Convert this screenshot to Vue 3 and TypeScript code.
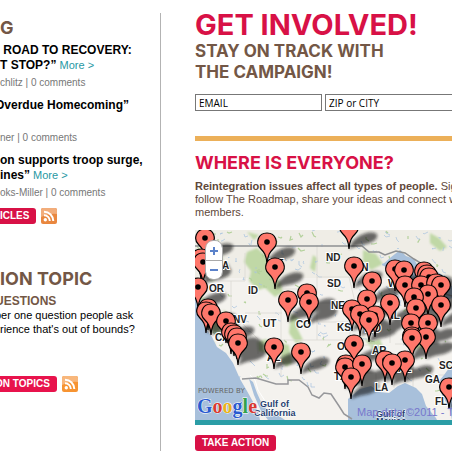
<script setup lang="ts">
interface Post {
  lines: string[]
  more: boolean
  bleed: boolean
  meta: string
}
interface Label {
  text: string
  x: number
  y: number
}

const posts: Post[] = [
  { lines: [' ROAD TO RECOVERY:', 'T STOP?”'], more: true, bleed: false, meta: 'chlitz | 0 comments' },
  { lines: ['Overdue Homecoming”', ''], more: false, bleed: true, meta: 'ner | 0 comments' },
  { lines: ['on supports troop surge,', 'ines”'], more: true, bleed: false, meta: 'oks-Miller | 0 comments' },
]

// Centre of each marker's dot, in map units, ordered back to front
const pins: [number, number][] = [
  [154, -3], [10, 8], [6, 28], [8, 32], [72, 12], [80, 37], [3, 57],
  [200, 39], [209, 40], [229, 41], [232, 44], [234, 47], [159, 36], [177, 51],
  [210, 55], [226, 55], [241, 53], [246, 55], [233, 64], [219, 67], [172, 69],
  [112, 63], [114, 72], [93, 70], [195, 73], [246, 75], [221, 78], [13, 78], [11, 81], [16, 83],
  [157, 79], [180, 85], [165, 84], [174, 90], [216, 93], [233, 93],
  [31, 91], [36, 102], [39, 104], [42, 107], [43, 113],
  [217, 106], [231, 107], [217, 108], [159, 114], [79, 117], [106, 122],
  [151, 134], [150, 137], [167, 134], [156, 147], [190, 130], [210, 130], [197, 133], [254, 157],
]

const labels: Label[] = [
  { text: 'WA', x: 18, y: 39 },
  { text: 'OR', x: 14, y: 62 },
  { text: 'ID', x: 53, y: 64 },
  { text: 'MT', x: 74, y: 37 },
  { text: 'ND', x: 131, y: 31 },
  { text: 'SD', x: 132, y: 57 },
  { text: 'NE', x: 136, y: 79 },
  { text: 'KS', x: 142, y: 101 },
  { text: 'MN', x: 158, y: 41 },
  { text: 'WI', x: 193, y: 57 },
  { text: 'IL', x: 196, y: 89 },
  { text: 'NV', x: 38, y: 93 },
  { text: 'UT', x: 68, y: 97 },
  { text: 'CO', x: 101, y: 98 },
  { text: 'CA', x: 20, y: 111 },
  { text: 'AZ', x: 72, y: 131 },
  { text: 'OK', x: 142, y: 120 },
  { text: 'MO', x: 170, y: 102 },
  { text: 'TX', x: 139, y: 150 },
  { text: 'AR', x: 177, y: 124 },
  { text: 'AL', x: 203, y: 142 },
  { text: 'LA', x: 180, y: 161 },
  { text: 'GA', x: 230, y: 153 },
  { text: 'SC', x: 244, y: 139 },
  { text: 'FL', x: 240, y: 175 },
]

// Repeatable scatter of small terrain marks across the land
function scatter(count: number, seed: number, height: number): string {
  let s = seed
  const next = (): number => {
    s = (s * 16807) % 2147483647
    return s / 2147483647
  }
  let d = ''
  for (let i = 0; i < count; i++) {
    const x = Math.round(next() * 320)
    const y = Math.round(next() * height)
    d += `M${x} ${y}l${Math.round(next() * 5 - 2)} ${Math.round(next() * 4)}l${Math.round(next() * 4)} ${Math.round(next() * 4 - 2)}`
  }
  return d
}
const rivers = scatter(230, 71, 155)
const woods = scatter(110, 913, 165)
</script>

<template>
  <div class="page">
    <aside class="side">
      <section class="blog">
        <h2 class="side-title">G</h2>
        <article v-for="post in posts" :key="post.meta" class="post">
          <h3 class="post-title" :class="{ bleed: post.bleed }">
            <span v-for="(line, i) in post.lines" :key="i" class="line">{{ line }}<a v-if="post.more && i === 1" class="more" href="#"> More &gt;</a></span>
          </h3>
          <p class="meta">{{ post.meta }}</p>
        </article>
        <div class="actions">
          <a class="button cut" href="#">ICLES</a>
          <a class="rss" href="#" aria-label="RSS">
            <svg viewBox="0 0 16 16"><rect width="16" height="16" rx="2" fill="#e9873f" /><path d="M0 2Q0 0 2 0H14Q16 0 16 2V6Q8 5 0 9Z" fill="#f2ad7b" /><circle cx="4.300" cy="11.700" r="1.700" fill="#fff" /><path d="M3 7.200A5.800 5.800 0 0 1 8.800 13M3 3.700A9.300 9.300 0 0 1 12.300 13" fill="none" stroke="#fff" stroke-width="2" /></svg>
          </a>
        </div>
      </section>
      <section class="topic">
        <h2 class="side-title">ION TOPIC</h2>
        <h3 class="sub bleed">UESTIONS</h3>
        <p class="question"><span class="line bleed">ber one question people ask</span><span class="line">rience that's out of bounds?</span></p>
        <div class="actions">
          <a class="button bright cut bleed" href="#">ON TOPICS</a>
          <a class="rss" href="#" aria-label="RSS">
            <svg viewBox="0 0 16 16"><rect width="16" height="16" rx="2" fill="#f79432" /><path d="M0 2Q0 0 2 0H14Q16 0 16 2V6Q8 5 0 9Z" fill="#f8b77c" /><circle cx="4.300" cy="11.700" r="1.700" fill="#fff" /><path d="M3 7.200A5.800 5.800 0 0 1 8.800 13M3 3.700A9.300 9.300 0 0 1 12.300 13" fill="none" stroke="#fff" stroke-width="2" /></svg>
          </a>
        </div>
      </section>
    </aside>

    <main class="main">
      <h1 class="title">GET INVOLVED!</h1>
      <p class="tagline">STAY ON TRACK WITH<br>THE CAMPAIGN!</p>
      <form class="signup" @submit.prevent>
        <input class="field" type="text" value="EMAIL" aria-label="Email">
        <input class="field wide" type="text" value="ZIP or CITY" aria-label="Zip or city">
      </form>
      <section class="where">
        <h2 class="where-title">WHERE IS EVERYONE?</h2>
        <p class="intro"><strong>Reintegration issues affect all types of people.</strong> Sign up to<br>follow The Roadmap, share your ideas and connect with<br>members.</p>
        <div class="map">
          <svg class="canvas" viewBox="0 0 257 190" preserveAspectRatio="xMinYMin slice">
            <defs>
              <filter id="soft" x="-30%" y="-30%" width="160%" height="160%"><feGaussianBlur stdDeviation="1.800" /></filter>
              <filter id="haze" x="-10%" y="-10%" width="120%" height="120%"><feGaussianBlur stdDeviation="1" /></filter>
            </defs>
            <rect width="257" height="190" fill="#f4f2ee" />
            <rect width="257" height="48" fill="#efede6" />
            <g fill="#c0d8a6" filter="url(#haze)">
              <path d="M18 17l8 2 2 12-4 14-8 8-3-14zM52 22l10-4 8 7 9 6-3 12 9 8 3 11-8 5-10-9-7 2-9-9 2-10-7-9zM5 66l8 4 4 14 8 13 2 10-9-5-8-18zM96 84l8 4-2 10 6 12-7 3-7-10zM62 112l9-3 6 6-4 8-10-2zM85 113l9 2 3 18-6 4-7-12zM28 80l5 3-2 7zM118 25l4 3-2 14-5-4zM168 20l13 4 7 10-12 6-8-9zM235 3l9 5 8 9-7 4-10-8zM168 107l9 5 8-3 3 9-10 2zM209 106l13-4 14 5-6 11-14 2zM12 108l8 5-3 6zM52 2l12 3-5 5z" />
            </g>
            <path :d="woods" fill="none" stroke="#b4d19c" stroke-width="1.200" />
            <path :d="rivers" fill="none" stroke="#a8c3df" stroke-width=".7" />
            <g fill="none" stroke="#dcd9d3" stroke-width=".8">
              <path d="M0 51H50V23M36 51V82L63 109V124M50 83H87M86 75V147M86 110H155M122 15V110M122 47H154M122 73H158M122 92H167M155 92V115H187M155 115V143H181V165M187 115V145H199V158M154 47L160 72H185M218 100V160M200 114H257M228 145H255M87 59H122M195 74V113" />
            </g>
            <g fill="#a8c0db">
              <path d="M0 50L5 57 3 73 6 83 9 96 17 107 22 117 31 123 38 133 45 149 52 161 57 170 63 181 65 190H0Z" />
              <path d="M54 149L58 152 62 163 67 174 77 184 84 186 90 190H73L66 181 59 165Z" />
              <path d="M153 190V169L165 159 176 156 184 162 194 163 203 156 210 153 221 158 227 164 231 176 241 188 242 190Z" />
              <path d="M257 134L249 145 244 151 247 165 255 179 257 190Z" />
              <path d="M187 35L195 28 205 20 211 26 219 29 224 38 217 40 208 36 195 39ZM211 47l8-8 5 5-5 12 1 15-6 5-3-15zM225 43l12-5 12 8 8 11-9 2-9-8-8-1zM235 67l22-11v12l-16 6z" />
            </g>
            <path d="M55 145L60 150 63 160 72 174 80 184" fill="none" stroke="#fff" stroke-width="1" />
            <path d="M0 16H167L174 22 184 22 190 25 201 21 210 23 219 29 229 35 239 48 247 63 257 66" fill="none" stroke="#8e9092" stroke-width="1.500" />
            <path d="M47 149L61 148 81 154H93V150H104L113 157 117 165 124 168 129 163 136 164 144 176 149 184 157 189" fill="none" stroke="#96979a" stroke-width="1.500" />

            <g filter="url(#soft)" fill="#111" opacity=".6">
              <path v-for="([x, y], i) in pins" :key="i" :transform="`translate(${x} ${y + 22})`" d="M0 0Q3-10 12-14Q22-19 28-15Q30-9 18-5Q9-4 0 0Z" />
            </g>

            <g class="state">
              <text v-for="label in labels" :key="label.text" :x="label.x" :y="label.y">{{ label.text }}</text>
            </g>

            <g v-for="([x, y], i) in pins" :key="`pin-${i}`" :transform="`translate(${x} ${y})`">
              <path class="pin" d="M0 22C-.5 13-3 10-6.500 6.500C-12 1-9-9 0-9C9-9 12 1 6.500 6.500C3 10 .5 13 0 22Z" />
              <circle r="2.800" />
            </g>

            <g class="water">
              <text x="65" y="177">Gulf of</text>
              <text x="59" y="186">California</text>
              <text x="181" y="187">Gulf of</text>
              <text x="181" y="194">Mexico</text>
            </g>
            <text class="powered" x="3" y="163">POWERED BY</text>
            <text class="google" x="2" y="183"><tspan fill="#2a5bd0">G</tspan><tspan fill="#d93a32">o</tspan><tspan fill="#e9b21c">o</tspan><tspan fill="#2a5bd0">g</tspan><tspan fill="#34a248">l</tspan><tspan fill="#d93a32">e</tspan></text>
            <text class="credit" x="162" y="186">Map data ©2011 - Terms</text>
          </svg>
          <div class="zoom">
            <button type="button" aria-label="Zoom in"><svg viewBox="0 0 10 10"><path d="M5 1V9M1 5H9" /></svg></button>
            <button type="button" aria-label="Zoom out"><svg viewBox="0 0 10 10"><path d="M1 5H9" /></svg></button>
          </div>
        </div>
        <a class="button" href="#">TAKE ACTION</a>
      </section>
    </main>
  </div>
</template>

<style>
body {
  margin: 0;
  overflow: hidden;
  background: #fff;
}
</style>

<style scoped>
.page {
  display: flex;
  gap: 34px;
  min-height: 100vh;
  box-sizing: border-box;
  padding-top: 13px;
  font-family: "Liberation Sans", Arial, sans-serif;
  font-size: 11px;
  color: #000;
}
h1, h2, h3, p {
  margin: 0;
}
a {
  text-decoration: none;
}
.side {
  flex: 0 0 160px;
  border-right: 1px solid #b3b3b3;
  white-space: pre;
}
.side-title {
  font: bold 18px/20px Inter, sans-serif;
  color: #735746;
}
.blog .side-title {
  padding: 5px 0;
}
.post {
  padding-bottom: 8px;
}
.post-title {
  font-size: 12px;
  line-height: 15px;
}
.line {
  display: block;
}
.post-title .line {
  min-height: 15px;
}
.bleed {
  text-indent: -5px;
}
.more {
  font-size: 11px;
  font-weight: normal;
  color: #2798a3;
}
.meta {
  padding-top: 3px;
  font-size: 10px;
  line-height: 14px;
  color: #777;
}
.actions {
  display: flex;
  gap: 5px;
}
.button {
  display: inline-block;
  padding: 0 7px;
  border-radius: 3px;
  background: #d81146;
  color: #fff;
  font-size: 10px;
  font-weight: bold;
  line-height: 16px;
}
.bright {
  background: #e8134c;
}
.cut {
  padding-left: 0;
  border-radius: 0 3px 3px 0;
}
.rss, .rss svg {
  display: block;
  width: 16px;
  height: 16px;
}
.topic {
  padding-top: 45px;
}
.sub {
  padding-top: 5px;
  font-size: 12px;
  line-height: 14px;
  color: #735746;
}
.question {
  padding-bottom: 40px;
  font-size: 11px;
  line-height: 14px;
}
.main {
  flex: 1;
  min-width: 0;
  overflow: hidden;
  white-space: nowrap;
}
.title {
  font: bold 29px/24px Inter, sans-serif;
  color: #d81146;
}
.tagline {
  padding-top: 4px;
  font: bold 17px/21px Inter, sans-serif;
  color: #735746;
}
.signup {
  display: flex;
  gap: 3px;
  padding: 11px 0 25px;
}
.field {
  flex: none;
  box-sizing: border-box;
  width: 127px;
  height: 17px;
  padding: 0 3px;
  border: 1px solid #777;
  background: #fff;
  font: 10px "Open Sans", sans-serif;
  color: #000;
}
.wide {
  width: 140px;
}
.where {
  border-top: 5px solid #ecb059;
}
.where-title {
  padding: 12px 0 7px;
  font: bold 18px/20px Inter, sans-serif;
  color: #d81146;
}
.intro {
  padding-bottom: 11px;
  line-height: 13px;
  color: #60483a;
}
.map {
  position: relative;
  margin-bottom: 10px;
  border-bottom: 5px solid #2b9da6;
}
.canvas {
  display: block;
  width: 100%;
  height: 190px;
}
.state {
  font: bold 10px "Liberation Sans", sans-serif;
  fill: #222;
  stroke: #fff;
  stroke-width: 2px;
  paint-order: stroke;
}
.pin {
  fill: #ff776b;
  stroke: #000;
  stroke-width: 1.2px;
}
.water {
  font: bold 9px "Liberation Sans", sans-serif;
  fill: #273f70;
  stroke: #fff;
  stroke-width: 1px;
  paint-order: stroke;
}
.powered {
  font: 7px "DejaVu Sans", sans-serif;
  fill: #666;
}
.google {
  font: bold 20px "Liberation Serif", serif;
  stroke: #fff;
  stroke-width: 1px;
  paint-order: stroke;
}
.credit {
  font: 11px "Liberation Sans", sans-serif;
  fill: #7777cc;
}
.zoom {
  position: absolute;
  top: 10px;
  left: 10px;
  display: flex;
  flex-direction: column;
  border: 1px solid #aaa;
  border-radius: 8px;
  overflow: hidden;
}
.zoom button {
  display: grid;
  place-items: center;
  width: 16px;
  height: 19px;
  padding: 0;
  border: 0;
  background: #fff;
}
.zoom button + button {
  border-top: 1px solid #aaa;
}
.zoom svg {
  width: 10px;
  height: 10px;
  fill: none;
  stroke: #5b82ca;
  stroke-width: 2;
}
</style>
